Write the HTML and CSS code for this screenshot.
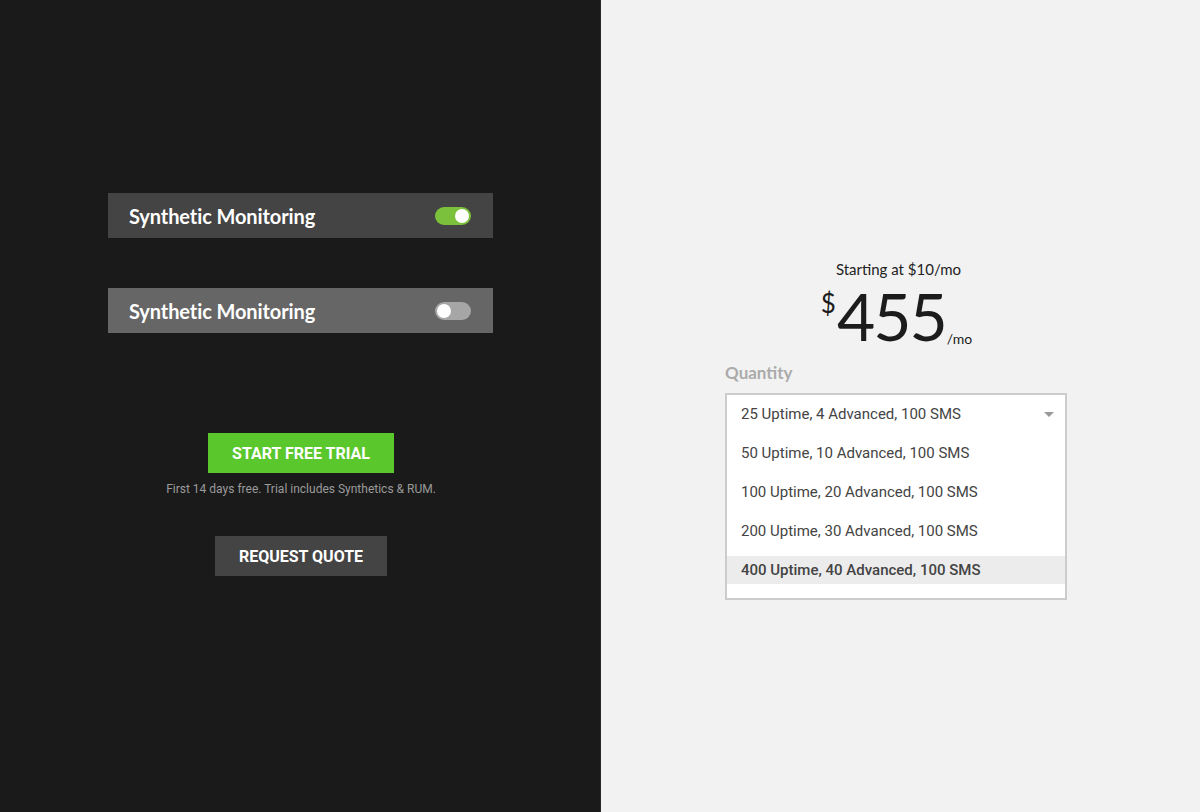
FILE: index.html
```html
<!DOCTYPE html>
<html lang="en">

<head>
    <meta charset="UTF-8">
    <meta name="viewport" content="width=device-width, initial-scale=1.0">
    <title>Pricing</title>
    <link rel="stylesheet" href="styles.css">
</head>

<body>
    <div class="panel panel-dark">
        <div class="toggle-bar">
            <span>Synthetic Monitoring</span>
            <span class="switch on"></span>
        </div>

        <div class="toggle-bar light">
            <span>Synthetic Monitoring</span>
            <span class="switch"></span>
        </div>

        <button class="btn btn-green">Start Free Trial</button>
        <p class="trial-note">First 14 days free. Trial includes Synthetics &amp; RUM.</p>

        <button class="btn btn-gray">Request Quote</button>
    </div>

    <div class="panel panel-light">
        <div class="price-box">
            <p class="starting">Starting at $10/mo</p>
            <div class="price">
                <span class="currency">$</span>
                <span class="amount">455</span>
                <span class="per">/mo</span>
            </div>
        </div>

        <div class="quantity">
            <label>Quantity</label>
            <ul class="dropdown">
                <li class="selected">25 Uptime, 4 Advanced, 100 SMS <span class="caret"></span></li>
                <li>50 Uptime, 10 Advanced, 100 SMS</li>
                <li>100 Uptime, 20 Advanced, 100 SMS</li>
                <li>200 Uptime, 30 Advanced, 100 SMS</li>
                <li class="hover">400 Uptime, 40 Advanced, 100 SMS</li>
            </ul>
        </div>
    </div>
</body>

</html>
```

FILE: styles.css
```css
body {
    margin: 0;
    height: 812px;
    display: flex;
    overflow: hidden;
    font-family: 'Lato', sans-serif;
}

.panel {
    height: 100%;
    display: flex;
    flex-direction: column;
    align-items: center;
    box-sizing: border-box;
}

.panel-dark {
    width: 601px;
    background-color: #1a1a1a;
    border-right: 1px solid #2a2a2a;
    padding-top: 193px;
    padding-left: 2px;
}

.panel-light {
    width: 599px;
    background-color: #f2f2f2;
    padding-top: 260px;
}

/* toggle rows */
.toggle-bar {
    width: 385px;
    height: 45px;
    background-color: #444444;
    color: #ffffff;
    font-size: 20px;
    font-weight: 700;
    letter-spacing: -0.1px;
    display: flex;
    align-items: center;
    justify-content: space-between;
    padding: 0 22px 0 21px;
    box-sizing: border-box;
    margin-bottom: 50px;
    margin-right: 1px;
}

.toggle-bar.light {
    background-color: #666666;
    margin-bottom: 100px;
}

.switch {
    width: 36px;
    height: 18px;
    border-radius: 9px;
    background-color: #a6a6a6;
    position: relative;
}

.switch::after {
    content: '';
    position: absolute;
    top: 2px;
    left: 2px;
    width: 14px;
    height: 14px;
    border-radius: 50%;
    background-color: #ffffff;
}

.switch.on {
    background-color: #7bc13b;
}

.switch.on::after {
    left: 20px;
}

/* buttons */
.btn {
    height: 40px;
    border: none;
    color: #ffffff;
    font-family: 'Roboto', sans-serif;
    font-weight: 700;
    font-size: 16px;
    text-transform: uppercase;
    cursor: pointer;
}

.btn-green {
    width: 186px;
    background-color: #5ac72c;
}

.btn-gray {
    width: 172px;
    background-color: #444444;
}

.trial-note {
    margin: 9px 0 40px;
    font-family: 'Roboto', sans-serif;
    font-size: 12px;
    color: #9a9a9a;
}

/* price */
.price-box {
    display: flex;
    flex-direction: column;
    align-items: center;
    margin-left: -8px;
}

.starting {
    margin: 0 0 0 4px;
    font-size: 15px;
    color: #222222;
}

.price {
    display: flex;
    align-items: flex-start;
    color: #1c1c1c;
    margin-top: 9px;
}

.currency {
    font-size: 26px;
    line-height: 1;
    margin-top: 3px;
    margin-right: 1px;
}

.amount {
    font-size: 66px;
    line-height: 58px;
    font-weight: 400;
    letter-spacing: -2px;
}

.per {
    font-size: 14px;
    align-self: flex-end;
    margin-left: 1px;
    margin-bottom: -2px;
}

/* quantity dropdown */
.quantity {
    width: 342px;
    margin-top: 17px;
    margin-left: -9px;
}

.quantity label {
    display: block;
    font-size: 17px;
    font-weight: 700;
    color: #ababab;
    margin-bottom: 10px;
}

.dropdown {
    list-style-type: none;
    margin: 0;
    padding: 0 0 14px;
    background-color: #ffffff;
    border: 2px solid #cccccc;
    font-family: 'Roboto', sans-serif;
    font-size: 15px;
    color: #444444;
}

.dropdown li {
    height: 39px;
    line-height: 38px;
    padding-left: 14px;
    position: relative;
}

.dropdown li.hover {
    height: 28px;
    line-height: 28px;
    margin-top: 5px;
    background-color: #ececec;
    font-weight: 500;
}

.caret {
    position: absolute;
    right: 11px;
    top: 17px;
    width: 0;
    height: 0;
    border-left: 5px solid transparent;
    border-right: 5px solid transparent;
    border-top: 5px solid #999999;
}
```
